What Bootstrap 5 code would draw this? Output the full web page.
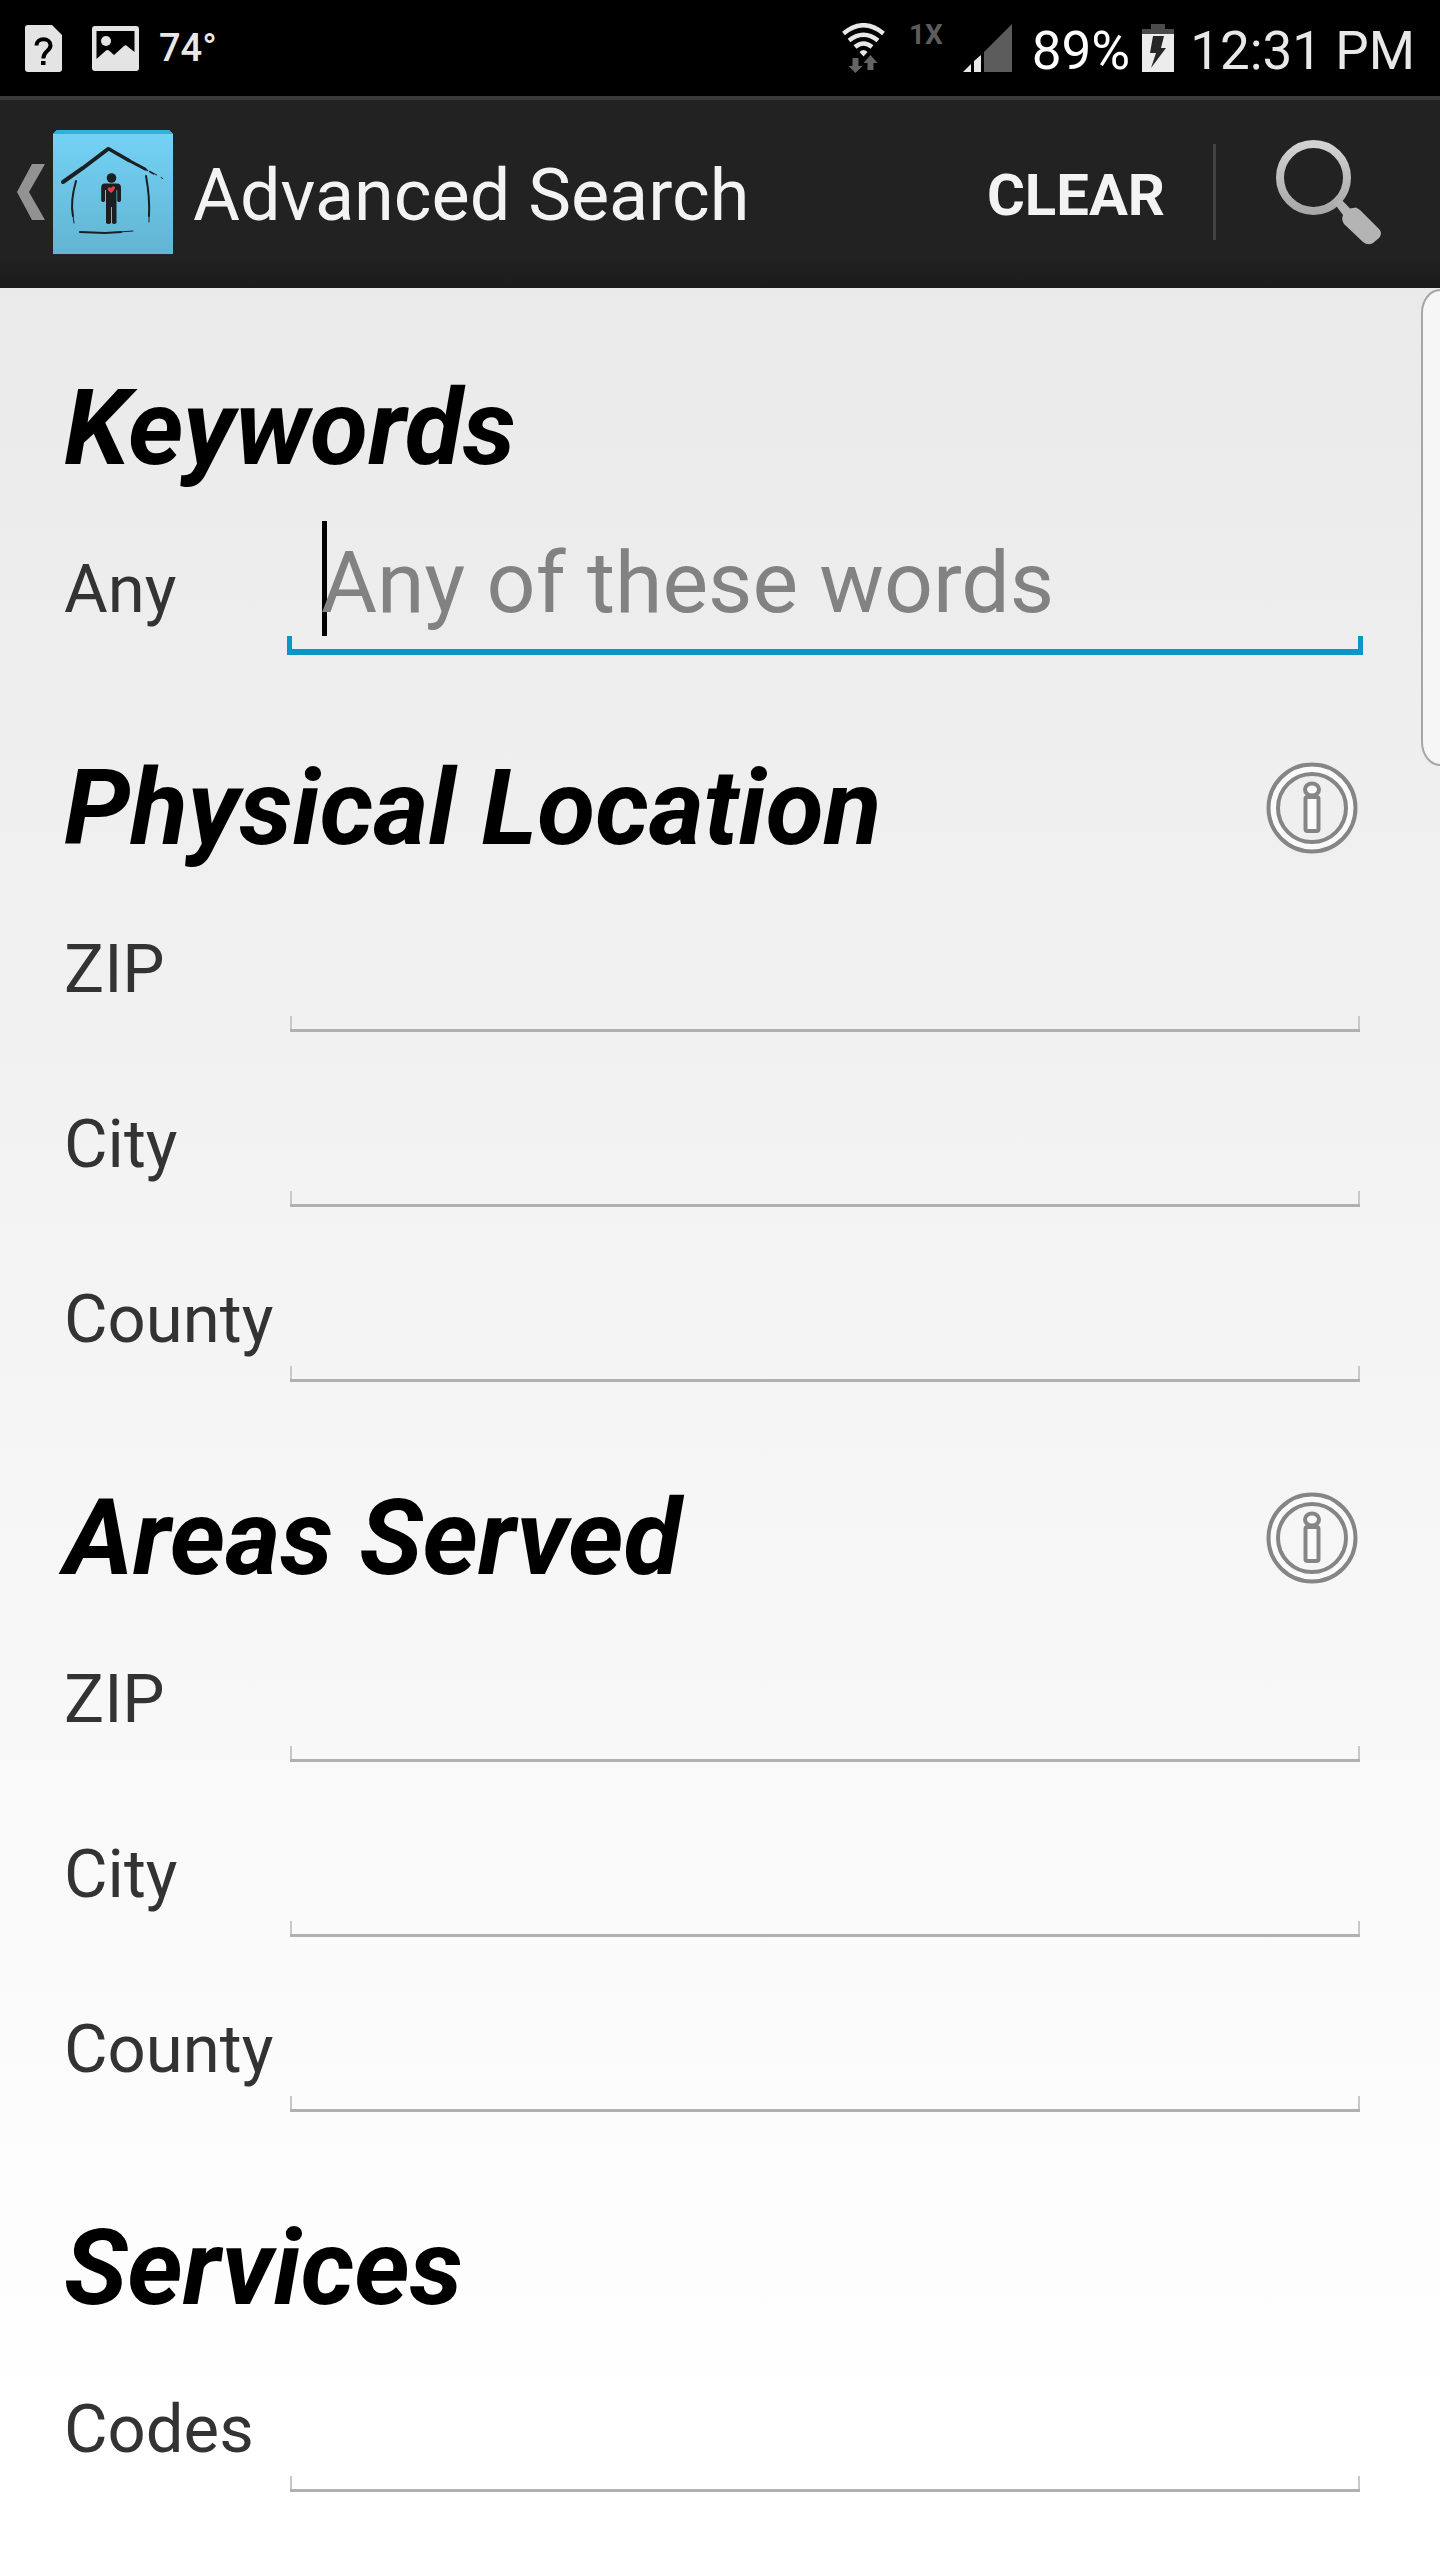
<!DOCTYPE html>
<html lang="en">
<head>
<meta charset="utf-8">
<meta name="viewport" content="width=device-width, initial-scale=1">
<title>Advanced Search</title>
<link rel="stylesheet" href="https://cdn.jsdelivr.net/npm/bootstrap@5.3.0/dist/css/bootstrap.min.css">
<style>
  body { font-family: Roboto, "Liberation Sans", sans-serif; min-height: 100vh; background: #fff; }
  svg { display: block; flex: none; }
  .status-bar { height: 96px; padding: 0 25px; background: #000; color: #e8e8e8; }
  .status-left { gap: 30px; }
  .status-temp { font-size: 38px; line-height: 48px; font-weight: 500; margin-left: -10px; }
  .status-net { font-size: 28px; line-height: 28px; font-weight: 700; color: #5c5c5c; padding-bottom: 26px; margin: 0 20px 0 24px; }
  .status-text { font-size: 53px; line-height: 64px; padding-top: 6px; white-space: nowrap; }
  .status-percent { color: #fff; margin: 0 12px 0 20px; }
  .status-clock { margin-left: 16px; }

  .action-bar { height: 192px; padding: 0 58px 4px 17px; color: #f3f3f3; border-top: 4px solid #3a3a3a;
    background: linear-gradient(#222 85%, #1a1a1a); }
  .up-link { gap: 8px; color: inherit; text-decoration: none; }
  .up-link:hover { color: inherit; }
  .bar-title { font-size: 72px; line-height: 84px; font-weight: 400; margin: 0 0 0 12px; padding-top: 8px; }
  .bar-btn { border: 0; background: none; padding: 0; color: inherit; }
  .clear-btn { font-size: 58px; line-height: 72px; font-weight: 700; padding: 6px 48px 0; }
  .bar-rule { width: 3px; height: 96px; background: #424242; margin-right: 60px; }

  .search-form { background: linear-gradient(#eaeaea, #fff 95%); padding: 8px 77px 40px 64px; }
  .section-head { padding: 72px 5px 13px 0; }
  .section-title { font-size: 106px; line-height: 120px; font-weight: 700; font-style: italic; color: #000; margin: 0; }
  .field-row { padding: 20px 0 21px; height: 175px; }
  .field-name { flex: 0 0 223px; font-size: 67px; line-height: 136px; color: #333; }
  .field-input { --line: #b0b0b0; --tick: #c8c8c8; --w: 2px; --inset: 3px;
    width: 100%; height: 134px; border: 0; outline: 0; border-radius: 0; color: #000;
    font-size: 86px; line-height: 110px; padding: 0 34px 12px;
    background:
      linear-gradient(var(--line), var(--line)) center bottom var(--inset) / calc(100% - 2 * var(--inset)) 3px no-repeat,
      linear-gradient(var(--tick), var(--tick)) left var(--inset) bottom var(--inset) / var(--w) 16px no-repeat,
      linear-gradient(var(--tick), var(--tick)) right var(--inset) bottom var(--inset) / var(--w) 16px no-repeat; }
  .field-active { --line: #0a97c8; --tick: #0a97c8;
    background:
      linear-gradient(var(--line), var(--line)) center bottom / 100% 6px no-repeat,
      linear-gradient(var(--tick), var(--tick)) left bottom / 5px 19px no-repeat,
      linear-gradient(var(--tick), var(--tick)) right bottom / 5px 19px no-repeat; }
  .field-input::placeholder { color: #828282; opacity: 1; }
  .text-caret { position: absolute; left: 35px; top: 0; width: 5px; height: 115px; background: #000; z-index: -1; }
  .field-wrap { isolation: isolate; }
  .edge-panel { position: absolute; top: 1px; right: 0; width: 19px; height: 477px; background: #f6f6f6;
    border: 2px solid #a6a6a6; border-right: 0; border-radius: 19px 0 0 19px / 24px 0 0 24px; }
</style>
<script src="https://cdn.jsdelivr.net/npm/bootstrap@5.3.0/dist/js/bootstrap.bundle.min.js"></script>
</head>
<body class="d-flex flex-column">

<div class="status-bar d-flex align-items-center justify-content-between">
  <div class="status-left d-flex align-items-center">
    <svg width="37" height="47" viewBox="0 0 37 47"><path fill="#e4e4e4" d="M3 0H27L37 10V44a3 3 0 0 1-3 3H3a3 3 0 0 1-3-3V3a3 3 0 0 1 3-3z"/><path d="M11.500 20.500C11.500 12 25.500 12 25.500 20.500C25.500 26 18.300 26 18.300 33.500" fill="none" stroke="#000" stroke-width="4"/><rect x="16" y="36" width="4.500" height="4"/></svg>
    <svg width="47" height="45" viewBox="0 0 47 45"><path fill="#e4e4e4" fill-rule="evenodd" d="M3 0H44a3 3 0 0 1 3 3V42a3 3 0 0 1-3 3H3a3 3 0 0 1-3-3V3a3 3 0 0 1 3-3zM4.500 5V33L14 24.500Q15.500 23.500 17 24.500L22 29L32 20Q33.500 18.500 35 20L42.500 26V5z"/><circle cx="14" cy="15" r="5" fill="#e4e4e4"/></svg>
    <span class="status-temp">74°</span>
  </div>
  <div class="d-flex align-items-center">
    <svg width="43" height="50" viewBox="0 0 43 50"><g fill="none" stroke="#e8e8e8" stroke-width="4.500"><path d="M1.500 10.500Q21.500-6 41.500 10.500"/><path d="M7 17.500Q21.500 6 36 17.500"/><path d="M13 24Q21.500 17 30 24"/></g><path fill="#e8e8e8" d="M17.500 29Q21.500 25 25.500 29L21.500 33.500z"/><path fill="#646464" d="M10.500 35h6v8h4L13.500 50L6.500 43h4zM25.500 47v-7h-4L28.500 32L35.500 40h-4v7z"/></svg>
    <span class="status-net">1X</span>
    <svg width="49" height="48" viewBox="0 0 49 48"><path fill="#5c5c5c" d="M21 28L49 0V48H21z"/><path fill="#e8e8e8" d="M0 48L8 40V48zM11 37L18 31V48H11z"/></svg>
    <span class="status-text status-percent">89%</span>
    <svg width="32" height="48" viewBox="0 0 32 48"><path fill="#4a4a4a" d="M9 0H23V5H32V10H0V5H9z"/><path fill="#ececec" d="M0 10H32V48H0z"/><path fill="#262626" d="M11 12H22L19 24H24L9 44L14 29H8z"/></svg>
    <span class="status-text status-clock">12:31 PM</span>
  </div>
</div>

<header class="action-bar d-flex align-items-center justify-content-between">
  <a href="#" class="up-link d-flex align-items-center">
    <svg width="28" height="56" viewBox="0 0 28 56"><path fill="#929292" d="M15 0H28L12 28L28 56H15L0 28z"/></svg>
    <svg width="120" height="124" viewBox="0 0 120 124">
      <defs><linearGradient id="tile" x2="0" y2="1"><stop stop-color="#74d3f6"/><stop offset="1" stop-color="#62b4d2"/></linearGradient></defs>
      <path fill="url(#tile)" d="M4 0H116L120 4V124H0V4z"/><path fill="#31b0dc" d="M4 0H116L120 4H0z"/>
      <g fill="none" stroke="#1c1f22" stroke-linecap="round">
        <path stroke-width="4" d="M10 52L30 38L55 19"/><path stroke-width="3.500" d="M56 19L76 30.500"/><path stroke-width="3" d="M75 30L92 39"/><path stroke-width="1.600" d="M90 38L103 45" stroke-dasharray="5 2.500"/><path stroke-width="1" d="M102 44L114 51" stroke-dasharray="2 5"/>
        <path stroke-width="2" d="M23 51Q17 72 20 86M93 46Q97 68 96 86"/><path stroke-width="1" d="M20 86L21 93M96 86V92"/>
        <path stroke-width="2.200" d="M27 102L52 103L68 102"/><path stroke-width="1" d="M66 102L80 101"/>
      </g>
      <circle cx="58.500" cy="48" r="4.800" fill="#1c1f22"/>
      <path fill="#1c1f22" d="M52 53.500H64Q68 53.500 68 57.500V71Q66 73 64.200 71V60H63.500V93Q61 95 59 93V77H58V93Q55.500 95 53 93V60H52V71Q50 73 48.200 71V57.500Q48.200 53.500 52 53.500z"/>
      <path fill="#ec3b4c" d="M58 63L54.500 59.500Q55 56 58 58Q60 55 62 57Q62 60 58 63z"/>
    </svg>
    <h1 class="bar-title">Advanced Search</h1>
  </a>
  <div class="d-flex align-items-center">
    <button type="button" class="bar-btn clear-btn">CLEAR</button>
    <span class="bar-rule"></span>
    <button type="submit" form="search" class="bar-btn" aria-label="Search">
      <svg width="106" height="106" viewBox="0 0 106 106"><defs><linearGradient id="glass" x2="0" y2="1"><stop stop-color="#d2d2d2"/><stop offset="1" stop-color="#a8a8a8"/></linearGradient></defs><circle cx="37.500" cy="38.500" r="33.500" fill="none" stroke="url(#glass)" stroke-width="8"/><path fill="#b4b4b4" d="M58 64L64 59L74 69.500L80 68.500L84 71L103 90Q107 94 103 99L97 104Q92 107 87 103L68 85Q65 81 67 76z"/></svg>
    </button>
  </div>
</header>

<main class="position-relative flex-grow-1 d-flex flex-column">
  <form id="search" class="search-form flex-grow-1">
    <section>
      <div class="section-head"><h2 class="section-title">Keywords</h2></div>
      <div class="field-row d-flex">
        <label class="field-name" for="any">Any</label>
        <div class="field-wrap position-relative flex-grow-1">
          <input id="any" class="field-input field-active" type="text" placeholder="Any of these words">
          <span class="text-caret"></span>
        </div>
      </div>
    </section>
    <section>
      <div class="section-head d-flex align-items-center justify-content-between">
        <h2 class="section-title">Physical Location</h2>
        <button type="button" class="bar-btn" aria-label="About physical location"><svg width="92" height="92" viewBox="0 0 92 92"><g fill="none" stroke="#858585" stroke-width="4"><circle cx="46" cy="46" r="39" stroke="#fafafa" stroke-width="7"/><circle cx="46" cy="46" r="43.500"/><circle cx="46" cy="46" r="34"/><rect x="39.500" y="35" width="13" height="34" rx="2" fill="#fafafa"/><ellipse cx="46" cy="27.500" rx="7" ry="6" fill="#fafafa"/></g></svg></button>
      </div>
      <div class="field-row d-flex"><label class="field-name" for="loc-zip">ZIP</label><div class="flex-grow-1"><input id="loc-zip" class="field-input" type="text"></div></div>
      <div class="field-row d-flex"><label class="field-name" for="loc-city">City</label><div class="flex-grow-1"><input id="loc-city" class="field-input" type="text"></div></div>
      <div class="field-row d-flex"><label class="field-name" for="loc-county">County</label><div class="flex-grow-1"><input id="loc-county" class="field-input" type="text"></div></div>
    </section>
    <section>
      <div class="section-head d-flex align-items-center justify-content-between">
        <h2 class="section-title">Areas Served</h2>
        <button type="button" class="bar-btn" aria-label="About areas served"><svg width="92" height="92" viewBox="0 0 92 92"><g fill="none" stroke="#858585" stroke-width="4"><circle cx="46" cy="46" r="39" stroke="#fafafa" stroke-width="7"/><circle cx="46" cy="46" r="43.500"/><circle cx="46" cy="46" r="34"/><rect x="39.500" y="35" width="13" height="34" rx="2" fill="#fafafa"/><ellipse cx="46" cy="27.500" rx="7" ry="6" fill="#fafafa"/></g></svg></button>
      </div>
      <div class="field-row d-flex"><label class="field-name" for="area-zip">ZIP</label><div class="flex-grow-1"><input id="area-zip" class="field-input" type="text"></div></div>
      <div class="field-row d-flex"><label class="field-name" for="area-city">City</label><div class="flex-grow-1"><input id="area-city" class="field-input" type="text"></div></div>
      <div class="field-row d-flex"><label class="field-name" for="area-county">County</label><div class="flex-grow-1"><input id="area-county" class="field-input" type="text"></div></div>
    </section>
    <section>
      <div class="section-head"><h2 class="section-title">Services</h2></div>
      <div class="field-row d-flex"><label class="field-name" for="codes">Codes</label><div class="flex-grow-1"><input id="codes" class="field-input" type="text"></div></div>
    </section>
  </form>
  <div class="edge-panel"></div>
</main>
</body>
</html>
